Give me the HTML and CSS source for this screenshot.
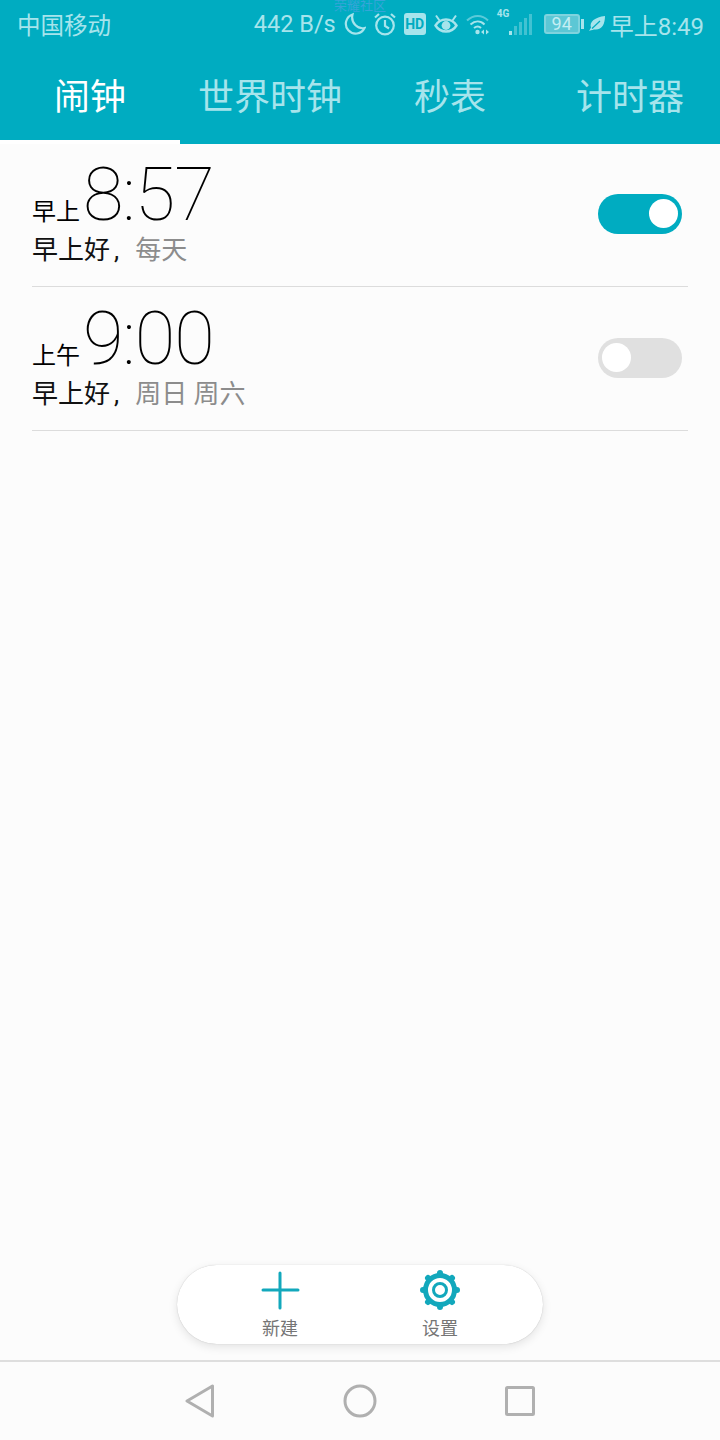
FILE: index.html
```html
<!DOCTYPE html>
<html lang="zh-CN">
<head>
    <meta charset="UTF-8">
    <meta name="viewport" content="width=device-width, initial-scale=1.0">
    <title>闹钟</title>
    <link rel="stylesheet" href="styles.css">
</head>
<body>
    <div class="app">
        <header class="header">
            <div class="watermark">荣耀社区</div>
            <div class="status-bar">
                <span class="carrier">中国移动</span>
                <div class="status-right">
                    <span class="speed">442 B/s</span>
                    <svg class="ic" width="22" height="24" viewBox="0 0 22 24" fill="none" stroke="currentColor" stroke-width="2.200"><path d="M8.500 2.500a9.800 9.800 0 1 0 12 13.500C14 17.500 6.500 11 8.500 2.500z"/></svg>
                    <svg class="ic" width="22" height="24" viewBox="0 0 22 24" fill="none" stroke="currentColor" stroke-width="2.200"><circle cx="11" cy="13.500" r="8.800"/><path d="M11 8v6l4 2.500M1 5.500l4-3.500M21 5.500L17 2"/></svg>
                    <span class="hd">HD</span>
                    <svg class="ic" width="24" height="22" viewBox="0 0 24 22" fill="none" stroke="currentColor" stroke-width="2.400"><path d="M1.500 12.500c5-8 16-8 21 0-5 8-16 8-21 0z"/><circle cx="12" cy="12.500" r="4.400" fill="currentColor" stroke="none"/><path d="M2 2.500l3.500 5M22 2.500l-3.500 5" stroke-width="2"/></svg>
                    <svg class="ic wifi" width="25" height="24" viewBox="0 0 25 24" fill="none" stroke="currentColor" stroke-width="2"><path d="M1 8.500c6.500-6 15-6 21 0" opacity=".55"/><path d="M4.500 12.500c4.500-4 10-4 14 0M8 16c2.500-2 5-2 7 0"/><circle cx="11.500" cy="20" r="2.200" fill="currentColor" stroke="none"/><path d="M18 17.500v5l-3-2.500zM20 17.500v5l3-2.500z" fill="currentColor" stroke="none"/></svg>
                    <div class="signal">
                        <span class="net">4G</span>
                        <svg width="24" height="24" viewBox="0 0 24 24" fill="currentColor"><rect x="0" y="18" width="3" height="4"/><rect x="5" y="13" width="3" height="9" opacity=".4"/><rect x="10" y="9" width="3" height="13" opacity=".4"/><rect x="15" y="5" width="3" height="17" opacity=".4"/><rect x="20" y="1" width="3" height="21" opacity=".4"/></svg>
                    </div>
                    <div class="battery"><div class="battery-body">94</div><div class="battery-tip"></div></div>
                    <svg class="leaf" width="16" height="18" viewBox="0 0 16 18" fill="currentColor"><path d="M0 16c1-1.500 1.500-2.500 2-3.500C0 7 6 2 16 1c0 8-3 14-10 13.500-1.500 0-3 .5-6 1.500z"/><path d="M3 13.500L11 6" stroke="#00acc1" stroke-width="1.200"/></svg>
                    <span class="clock">早上8:49</span>
                </div>
            </div>
            <nav class="tabs">
                <div class="tab active">闹钟</div>
                <div class="tab">世界时钟</div>
                <div class="tab">秒表</div>
                <div class="tab">计时器</div>
            </nav>
        </header>

        <main class="alarm-list">
            <div class="alarm">
                <div class="alarm-info">
                    <div class="alarm-time"><span class="period">早上</span><span class="digits">8:57</span></div>
                    <div class="alarm-label">早上好<span class="comma">,</span><span class="repeat">每天</span></div>
                </div>
                <div class="switch on"><div class="knob"></div></div>
            </div>
            <div class="alarm">
                <div class="alarm-info">
                    <div class="alarm-time"><span class="period">上午</span><span class="digits">9:00</span></div>
                    <div class="alarm-label">早上好<span class="comma">,</span><span class="repeat">周日 周六</span></div>
                </div>
                <div class="switch"><div class="knob"></div></div>
            </div>
        </main>

        <div class="toolbar">
            <div class="tool">
                <svg width="40" height="40" viewBox="0 0 40 40" fill="none" stroke="#12a8bc" stroke-width="3" stroke-linecap="round"><path d="M20 3v35M3 20h35"/></svg>
                <span>新建</span>
            </div>
            <div class="tool">
                <svg width="40" height="40" viewBox="0 0 40 40" fill="none" stroke="#12a8bc"><circle cx="20" cy="20" r="14.500" stroke-width="5"/><circle cx="20" cy="20" r="6.500" stroke-width="3"/><path stroke-width="6" stroke-linecap="round" d="M20 3v1M20 36v1M3 20h1M36 20h1M8 8l.6.600M31.400 31.400l.6.600M32 8l-.6.600M8.600 31.400l-.6.600"/></svg>
                <span>设置</span>
            </div>
        </div>

        <footer class="nav-bar">
            <svg width="30" height="34" viewBox="0 0 30 34" fill="none" stroke="#b0b0b0" stroke-width="3" stroke-linejoin="round"><path d="M27.500 2v30L2 17z"/></svg>
            <svg width="34" height="34" viewBox="0 0 34 34" fill="none" stroke="#b0b0b0" stroke-width="3"><circle cx="17" cy="17" r="15"/></svg>
            <svg width="30" height="30" viewBox="0 0 30 30" fill="none" stroke="#b0b0b0" stroke-width="3" stroke-linejoin="round"><rect x="1.500" y="1.500" width="27" height="27" rx="1"/></svg>
        </footer>
    </div>
</body>
</html>
```

FILE: styles.css
```css
* {
    box-sizing: border-box;
}
body {
    margin: 0;
    background-color: #fcfcfc;
    font-family: "Roboto", "Noto Sans CJK SC", sans-serif;
}
.app {
    display: flex;
    flex-direction: column;
    height: 1440px;
}
.header {
    position: relative;
    background-color: #00acc1;
    height: 144px;
}
.watermark {
    position: absolute;
    top: -1px;
    left: 334px;
    font-size: 13px;
    line-height: 14px;
    color: #35a5d8;
}
.status-bar {
    display: flex;
    justify-content: space-between;
    align-items: center;
    height: 48px;
    padding: 0 16px 0 17px;
    color: #a6e4ec;
    font-size: 24px;
}
.carrier {
    font-size: 23.500px;
}
.status-right {
    display: flex;
    align-items: center;
}
.speed {
    margin-right: 8px;
    font-size: 23.500px;
}
.ic {
    margin-right: 8px;
}
.wifi {
    margin-right: 6px;
}
.hd {
    width: 22px;
    height: 22px;
    margin-right: 8px;
    border-radius: 3px;
    background-color: #a6e4ec;
    color: #00acc1;
    font-size: 14px;
    font-weight: 700;
    line-height: 22px;
    text-align: center;
}
.signal {
    position: relative;
    display: flex;
    justify-content: flex-end;
    align-items: flex-end;
    width: 36px;
    height: 26px;
    margin-right: 11px;
}
.net {
    position: absolute;
    top: -3px;
    left: 0;
    font-size: 10px;
    font-weight: 700;
    line-height: 12px;
}
.battery {
    display: flex;
    align-items: center;
    margin-right: 5px;
}
.battery-body {
    width: 36px;
    height: 20px;
    border: 2px solid #7fd3de;
    border-radius: 3px;
    background-color: #5cc7d5;
    color: #c4eef3;
    font-size: 18px;
    line-height: 16px;
    text-align: center;
}
.battery-tip {
    width: 3px;
    height: 10px;
    margin-left: 1px;
    background-color: #a6e4ec;
}
.leaf {
    margin-right: 5px;
}
.tabs {
    display: grid;
    grid-template-columns: repeat(4, 180px);
}
.tab {
    height: 96px;
    padding-top: 2px;
    color: #a6e4ec;
    font-size: 36px;
    line-height: 96px;
    text-align: center;
}
.tab.active {
    color: #fff;
    border-bottom: 4px solid #fff;
}
.alarm-list {
    flex: 1;
    margin-top: -1px;
}
.alarm {
    display: flex;
    justify-content: space-between;
    align-items: center;
    height: 144px;
    margin: 0 32px;
    padding: 0 6px 2px 0;
    border-bottom: 1px solid #dcdcdc;
}
.alarm-info {
    display: flex;
    flex-direction: column;
    gap: 0;
    margin-top: -4px;
}
.alarm-time {
    display: flex;
    align-items: baseline;
    color: #000;
}
.period {
    margin-right: 3px;
    font-size: 24px;
}
.digits {
    font-size: 74px;
    font-weight: 100;
    letter-spacing: -1px;
    line-height: 76px;
}
.alarm-label {
    color: #111;
    font-size: 26px;
    line-height: 34px;
}
.comma {
    margin-right: 16px;
    margin-left: 4px;
}
.repeat {
    color: #8c8c8c;
}
.switch {
    display: flex;
    align-items: center;
    width: 84px;
    height: 40px;
    padding: 0 4px;
    border-radius: 20px;
    background-color: #e0e0e0;
}
.switch.on {
    justify-content: flex-end;
    background-color: #00acc1;
}
.knob {
    width: 29px;
    height: 29px;
    border-radius: 50%;
    background-color: #fff;
}
.toolbar {
    display: flex;
    justify-content: center;
    gap: 80px;
    width: 366px;
    height: 79px;
    margin: 0 auto 16px;
    border-radius: 40px;
    background-color: #fff;
    box-shadow: 0 0 1px rgba(0, 0, 0, 0.25), 0 3px 10px rgba(0, 0, 0, 0.1);
}
.tool {
    display: flex;
    flex-direction: column;
    align-items: center;
    width: 80px;
    padding-top: 5px;
    color: #757575;
    font-size: 18px;
    line-height: 24px;
}
.tool span {
    margin-top: 7px;
}
.nav-bar {
    display: grid;
    grid-template-columns: repeat(3, 160px);
    justify-content: center;
    justify-items: center;
    align-items: center;
    height: 80px;
    border-top: 2px solid #dedede;
}
```
